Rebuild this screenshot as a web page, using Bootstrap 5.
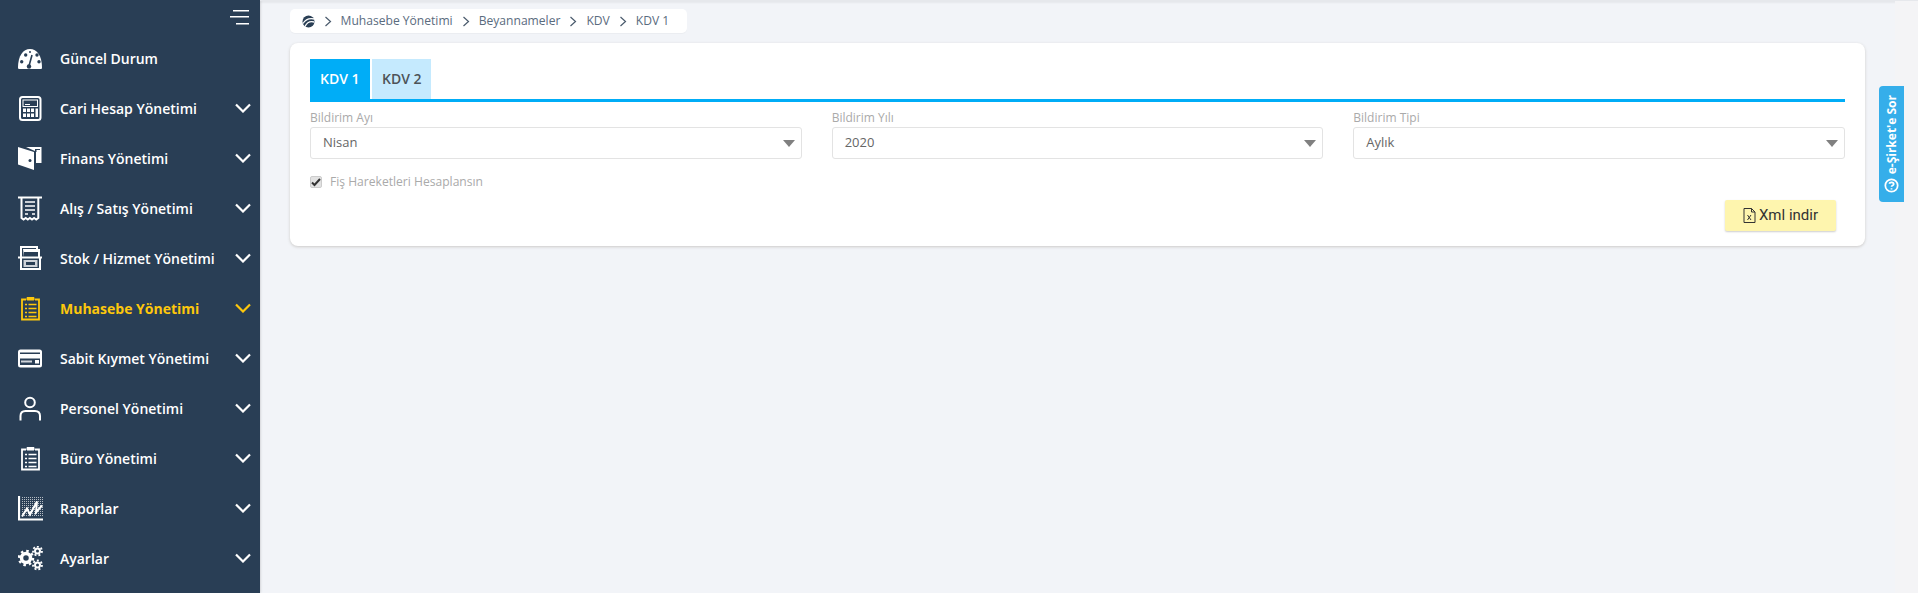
<!doctype html>
<html lang="tr"><head><meta charset="utf-8">
<link href="https://cdn.jsdelivr.net/npm/bootstrap@5.3.0/dist/css/bootstrap.min.css" rel="stylesheet">
<style>
html,body{height:100%;overflow:hidden}
body{background:#f2f4f8;font-family:"Open Sans","Liberation Sans",sans-serif;color:#555}
.shell{height:593px}
.side{width:260px;background:#293e55;flex:none;box-shadow:0 0 3px rgba(0,0,0,.2)}
.burger{height:33px;padding:10px 11px 0 0}
.mitem{height:50px;color:#fff;font-weight:600;font-size:14px;text-decoration:none;padding-left:18px;padding-right:9px}
.mitem:hover{color:#fff}
.mitem.on,.mitem.on:hover{color:#fdc70c;font-weight:700}
.mico{width:25px;height:25px;margin-right:17px;flex:none}
.mlabel{flex:1}
.chev{width:16px;height:10px;flex:none}
.work{position:relative;flex:1;border-top:1px solid #e6e8ec;box-shadow:inset 0 2px 2px rgba(0,0,0,.05);padding:8px 53px 0 30px}
.crumb{position:relative;width:397px;height:24px;background:#fff;border-radius:5px;font-size:12.1px;color:#5a6b7e;padding-left:11.500px;gap:9px;box-shadow:0 1px 1px rgba(0,0,0,.03);margin-bottom:10px}
.crumb svg.sep{width:8px;height:11px}
.panel{position:relative;background:#fff;border-radius:8px;height:203px;padding:16px 20px;box-shadow:0 1px 3px rgba(90,80,60,.25)}
.tabbar{border-bottom:3px solid #00adf7;height:43px;gap:2px}
.tabx{height:40px;font-size:14px;font-weight:600;padding:0 10px;line-height:40px;background:#c5eafe;color:#4d5358;white-space:nowrap}
.tabx.act{background:#00adf7;color:#fff;width:60px}
.tabx.pas{width:59px}
.flds{--bs-gutter-x:30px;margin-top:8px}
.flbl{font-size:12px;color:#aaa;line-height:16px;margin:0 0 1px}
.fsel{height:32px;font-size:13px;color:#666;border:1px solid #e3e3e3;border-radius:3px;padding-left:12px;padding-right:6px;background:#fff}
.caret{width:0;height:0;border-left:6.5px solid transparent;border-right:6.5px solid transparent;border-top:7px solid #808080}
.chk{margin-top:13px;font-size:12.1px;color:#aaa;gap:8px;height:20px}
.chkbox{width:12px;height:12px;border-radius:2px;background:#e2e2e2;border:1px solid #ccc}
.dlbar{padding-right:9px;margin-top:8px}
.dl{height:31px;width:111px;background:#fef5ae;border-radius:2px;color:#333;font-family:Roboto,"Liberation Sans",sans-serif;font-size:15px;gap:3px;box-shadow:0 1px 2px rgba(0,0,0,.2)}
.ask{position:absolute;left:1619px;top:85px;width:25px;height:116px;background:#35aeea;border-radius:4px 0 0 4px;color:#fff;padding-bottom:9px}
.asktxt{writing-mode:vertical-rl;transform:rotate(180deg);font-size:12px;font-weight:700;line-height:25px;white-space:nowrap}
.askic{margin-top:4px}
.strip{position:absolute;right:0;top:0;bottom:0;width:23px;background:#f4f4f6}
</style></head><body>
<div class="shell d-flex">
<nav class="side d-flex flex-column">
<div class="burger d-flex justify-content-end"><svg width="19" height="15" viewBox="0 0 19 15" stroke="#fff" stroke-width="1.4"><path d="M3 1h16M0 7h19M6 14h13" transform="translate(0 -.2)"/></svg></div>

<a class="mitem d-flex align-items-center" href="#"><svg class="mico" viewBox="0 0 25 25"><path fill="#fff" d="M0 21.500C0 10 5 3 12 3s12 7 12 18.500c0 1-.5 1.500-1.500 1.500h-21C.5 23 0 22.500 0 21.500z"/><g fill="#293e55"><circle cx="3.700" cy="15.700" r="1.700"/><circle cx="7.700" cy="9" r="1.700"/><circle cx="12" cy="6" r="1"/><circle cx="19" cy="9" r="1.700"/><circle cx="21" cy="15.700" r="1.700"/><circle cx="11" cy="20.500" r="2.200"/></g><path stroke="#293e55" stroke-width="1.600" d="M11 20l3-11"/></svg><span class="mlabel">Güncel Durum</span></a>

<a class="mitem d-flex align-items-center" href="#"><svg class="mico" viewBox="0 0 25 25" fill="none"><rect x="2" y="1" width="20.500" height="23" rx="2.500" stroke="#fff" stroke-width="2"/><rect x="5" y="4" width="14.500" height="6.500" stroke="#fff"/><path stroke="#fff" d="M7 8.500h5"/><path fill="#fff" d="M5 12.500h3v3.500H5zM9 12.500h3v3.500H9zM13 12.500h3v3.500h-3zM5 17.500h3v3.500H5zM9 17.500h3v3.500H9zM13 17.500h3v3.500h-3zM17.500 12.500h2.500v8.500h-2.500z"/></svg><span class="mlabel">Cari Hesap Yönetimi</span><svg class="chev" viewBox="0 0 16 10" fill="none" stroke="#fff" stroke-width="2.200"><path d="M1 1.500l7 7 7-7"/></svg></a>

<a class="mitem d-flex align-items-center" href="#"><svg class="mico" viewBox="0 0 25 25"><path fill="#fff" d="M0 1l16 5V24L0 18.500zM8 1h15.500v16H18V5.500z"/><circle cx="12" cy="14.500" r="1.500" fill="#293e55"/><path fill="#293e55" d="M17 3h5v1h-3.500v2H17z"/></svg><span class="mlabel">Finans Yönetimi</span><svg class="chev" viewBox="0 0 16 10" fill="none" stroke="#fff" stroke-width="2.200"><path d="M1 1.500l7 7 7-7"/></svg></a>

<a class="mitem d-flex align-items-center" href="#"><svg class="mico" viewBox="0 0 25 25" fill="none" stroke="#fff"><path stroke-width="2" d="M0 1.500h24M3.500 1.500v20.500l2.100 1.500 2.100-1.500 2.100 1.500 2.100-1.500 2.100 1.500 2.100-1.500 2.100 1.500 2.100-1.500V1.500"/><path stroke-width="1.700" d="M7 6h10M7 10h10M7 14h10M7 18h3M14 18h3"/></svg><span class="mlabel">Alış / Satış Yönetimi</span><svg class="chev" viewBox="0 0 16 10" fill="none" stroke="#fff" stroke-width="2.200"><path d="M1 1.500l7 7 7-7"/></svg></a>

<a class="mitem d-flex align-items-center" href="#"><svg class="mico" viewBox="0 0 25 25" fill="none"><path stroke="#fff" stroke-width="2" d="M3 11V1h16v3"/><path fill="#fff" d="M5 3h17v8h-2V6H6v5z"/><path fill="#fff" d="M0 10.500h24v2H0z"/><path stroke="#fff" stroke-width="2" d="M3 12v11h19V12"/><path fill="#cfd3d9" d="M5.500 14h14v7h-14z"/><path fill="#293e55" d="M8 16h9v3H8z"/></svg><span class="mlabel">Stok / Hizmet Yönetimi</span><svg class="chev" viewBox="0 0 16 10" fill="none" stroke="#fff" stroke-width="2.200"><path d="M1 1.500l7 7 7-7"/></svg></a>

<a class="mitem on d-flex align-items-center" href="#"><svg class="mico" viewBox="0 0 25 25" fill="none" stroke="#fdc70c"><path stroke-width="1.800" d="M8 3.500H4v20h17v-20h-4"/><path fill="#fdc70c" stroke-width="1" d="M9 4V1.500h7V4z"/><path stroke-width="1.600" d="M7 8.500h2M10.500 8.500h8M7 12.500h2M10.500 12.500h8M7 16.500h2M10.500 16.500h8M7 20.500h2M10.500 20.500h8"/></svg><span class="mlabel">Muhasebe Yönetimi</span><svg class="chev" viewBox="0 0 16 10" fill="none" stroke="#fdc70c" stroke-width="2.200"><path d="M1 1.500l7 7 7-7"/></svg></a>

<a class="mitem d-flex align-items-center" href="#"><svg class="mico" viewBox="0 0 25 25"><rect y="3.500" width="24" height="18" rx="2.500" fill="#fff"/><path fill="#293e55" d="M2 6.500h20v1.600H2zM2 12.500h20v6.500H2z"/><path fill="#cfd3d9" d="M3 14.500h11v2H3z"/><path fill="#fff" d="M17 14h4v3.500h-4z"/></svg><span class="mlabel">Sabit Kıymet Yönetimi</span><svg class="chev" viewBox="0 0 16 10" fill="none" stroke="#fff" stroke-width="2.200"><path d="M1 1.500l7 7 7-7"/></svg></a>

<a class="mitem d-flex align-items-center" href="#"><svg class="mico" viewBox="0 0 25 25" fill="none" stroke="#fff" stroke-width="2"><circle cx="12" cy="6.500" r="4.800"/><path d="M2.500 24.500v-4.500c0-3 2-5 5-5h9.500c3 0 5 2 5 5v4.500"/></svg><span class="mlabel">Personel Yönetimi</span><svg class="chev" viewBox="0 0 16 10" fill="none" stroke="#fff" stroke-width="2.200"><path d="M1 1.500l7 7 7-7"/></svg></a>

<a class="mitem d-flex align-items-center" href="#"><svg class="mico" viewBox="0 0 25 25" fill="none" stroke="#fff"><path stroke-width="1.800" d="M8 3.500H4v20h17v-20h-4"/><path fill="#fff" stroke-width="1" d="M9 4V1.500h7V4z"/><path stroke-width="1.600" d="M7 8.500h2M10.500 8.500h8M7 12.500h2M10.500 12.500h8M7 16.500h2M10.500 16.500h8M7 20.500h2M10.500 20.500h8"/></svg><span class="mlabel">Büro Yönetimi</span><svg class="chev" viewBox="0 0 16 10" fill="none" stroke="#fff" stroke-width="2.200"><path d="M1 1.500l7 7 7-7"/></svg></a>

<a class="mitem d-flex align-items-center" href="#"><svg class="mico" viewBox="0 0 25 25" fill="none" stroke="#fff"><path stroke-width="2.200" d="M1 0v23.500h24"/><path stroke-width="1" stroke-dasharray="1 1" opacity=".65" d="M4 1.500h21M4 3.500h21M4 5.500h21M4 7.500h21M4 9.500h21M4 11.500h21M4 13.500h21M4 15.500h21M4 17.500h21M4 19.500h21"/><path stroke-width="2" d="M4 20.500l5-8 3 6 7-13-1 11 6-7"/></svg><span class="mlabel">Raporlar</span><svg class="chev" viewBox="0 0 16 10" fill="none" stroke="#fff" stroke-width="2.200"><path d="M1 1.500l7 7 7-7"/></svg></a>

<a class="mitem d-flex align-items-center" href="#"><svg class="mico" viewBox="0 0 25 25" fill="none" stroke="#fff"><circle cx="8" cy="12" r="4.500" stroke-width="3.500"/><circle cx="8" cy="12" r="7" stroke-width="2.500" stroke-dasharray="2.500 3"/><circle cx="19.500" cy="5" r="2.500" stroke-width="2"/><circle cx="19.500" cy="5" r="4.500" stroke-width="1.800" stroke-dasharray="2 2"/><circle cx="19.500" cy="19" r="2.500" stroke-width="2"/><circle cx="19.500" cy="19" r="4.500" stroke-width="1.800" stroke-dasharray="2 2"/></svg><span class="mlabel">Ayarlar</span><svg class="chev" viewBox="0 0 16 10" fill="none" stroke="#fff" stroke-width="2.200"><path d="M1 1.500l7 7 7-7"/></svg></a>
</nav>

<main class="work">
<div class="strip"></div>
<div class="crumb d-flex align-items-center">
<svg width="13" height="13" viewBox="0 0 13 13"><circle cx="6.500" cy="6.500" r="6" fill="#2a3f55"/><path d="M1 8.500C4 3.500 8 3 12.500 4M3 11.500c2-4 5-5.500 9-4.500" fill="none" stroke="#fff" stroke-width="1.300"/></svg>
<svg class="sep" viewBox="0 0 8 11" fill="none" stroke="#4a5a6c" stroke-width="1.200"><path d="M1.500 1l5 4.500-5 4.500"/></svg><span>Muhasebe Yönetimi</span>
<svg class="sep" viewBox="0 0 8 11" fill="none" stroke="#4a5a6c" stroke-width="1.200"><path d="M1.500 1l5 4.500-5 4.500"/></svg><span>Beyannameler</span>
<svg class="sep" viewBox="0 0 8 11" fill="none" stroke="#4a5a6c" stroke-width="1.200"><path d="M1.500 1l5 4.500-5 4.500"/></svg><span>KDV</span>
<svg class="sep" viewBox="0 0 8 11" fill="none" stroke="#4a5a6c" stroke-width="1.200"><path d="M1.500 1l5 4.500-5 4.500"/></svg><span>KDV 1</span>
</div>
<section class="panel">
<div class="tabbar d-flex"><div class="tabx act">KDV 1</div><div class="tabx pas">KDV 2</div></div>
<div class="row flds">
<div class="col-4"><p class="flbl">Bildirim Ayı</p><div class="fsel d-flex align-items-center justify-content-between"><span>Nisan</span><i class="caret"></i></div></div>
<div class="col-4"><p class="flbl">Bildirim Yılı</p><div class="fsel d-flex align-items-center justify-content-between"><span>2020</span><i class="caret"></i></div></div>
<div class="col-4"><p class="flbl">Bildirim Tipi</p><div class="fsel d-flex align-items-center justify-content-between"><span>Aylık</span><i class="caret"></i></div></div>
</div>
<div class="chk d-flex align-items-center"><span class="chkbox d-flex align-items-center justify-content-center"><svg width="10" height="9" viewBox="0 0 10 9" fill="none" stroke="#333" stroke-width="2"><path d="M1 4.500l2.500 2.500L9 1"/></svg></span><span>Fiş Hareketleri Hesaplansın</span></div>
<div class="dlbar d-flex justify-content-end"><div class="dl d-flex align-items-center justify-content-center"><svg width="13" height="15" viewBox="0 0 13 15" fill="none" stroke="#333"><path d="M1 .500h7.500L12 4v10.500H1zM8.500.500V4H12"/><path d="M4.500 7l3.500 5M8 7l-3.500 5"/></svg><span>Xml indir</span></div></div>
</section>
<aside class="ask d-flex flex-column align-items-center justify-content-end"><span class="asktxt">e-Şirket'e Sor</span><svg class="askic" width="15" height="15" viewBox="0 0 17 17" fill="none" stroke="#fff" stroke-width="2"><circle cx="8.500" cy="8.500" r="7"/><path d="M6 6.500c.5-2 5-2 5 .5 0 1.500-2.500 1.500-2.500 3M8.500 11.500v1.500"/></svg></aside>
</main>
</div>
</body></html>
